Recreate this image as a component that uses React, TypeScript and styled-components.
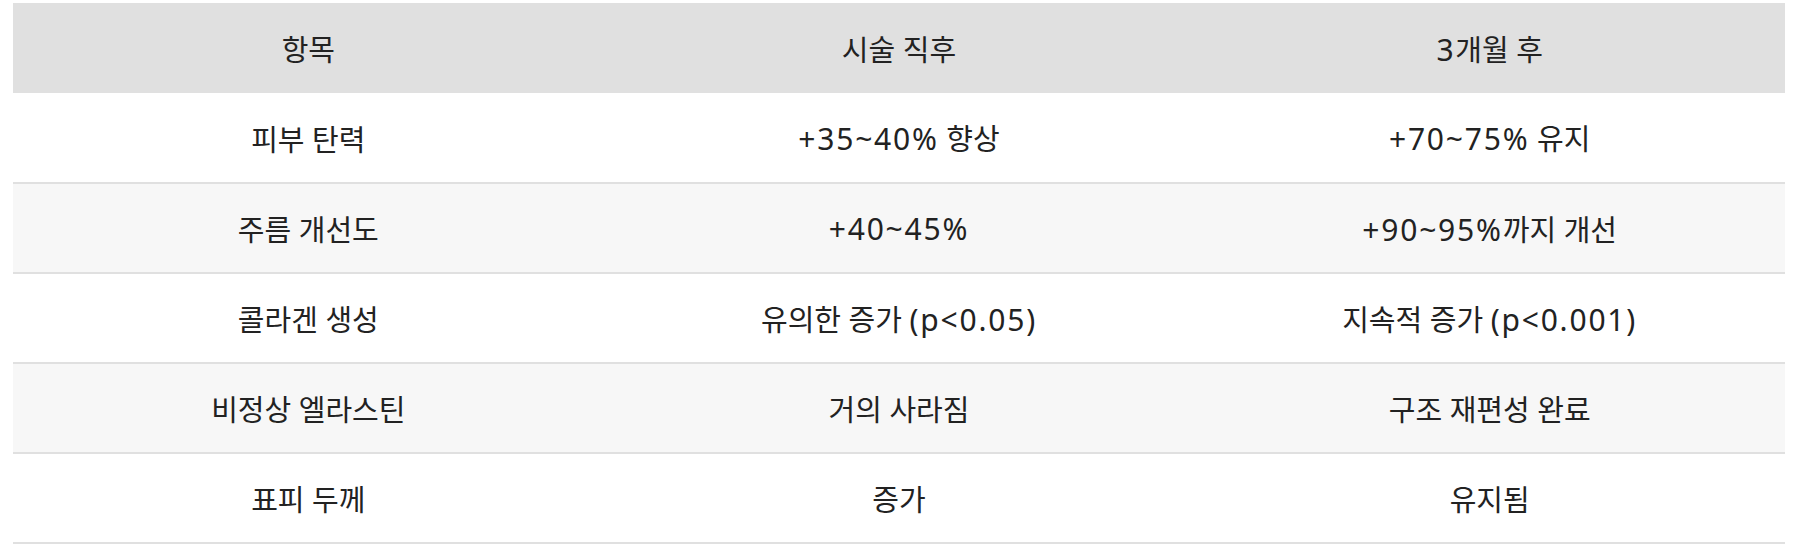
import React from "react";
import styled, { createGlobalStyle } from "styled-components";

const GlobalStyle = createGlobalStyle`
  html, body {
    margin: 0;
    padding: 0;
    background: #ffffff;
  }
  body {
    font-family: "Noto Sans", "Noto Sans CJK KR", sans-serif;
    color: #222222;
  }
`;

const Wrapper = styled.div`
  padding: 3px 17px 0 13px;
`;

const Table = styled.table`
  width: 100%;
  border-collapse: collapse;
  table-layout: fixed;
  font-size: 29px;
`;

const HeadRow = styled.tr`
  background: #e0e0e0;
`;

const HeadCell = styled.th`
  height: 90px;
  padding: 0 10px;
  font-weight: 400;
  text-align: center;
  vertical-align: middle;
  box-sizing: border-box;
`;

const Row = styled.tr<{ $striped: boolean }>`
  background: ${(p) => (p.$striped ? "#f7f7f7" : "#ffffff")};
  border-bottom: 2px solid #e0e0e0;
`;

const Cell = styled.td`
  height: 90px;
  padding: 0 10px;
  text-align: center;
  vertical-align: middle;
  box-sizing: border-box;
`;

// digits and symbols are set a touch larger and looser than the hangul
const Latin = styled.span`
  font-size: 30px;
  letter-spacing: 0.06em;
`;

const Text: React.FC<{ value: string }> = ({ value }) => (
  <>
    {value.split(/([^가-힣\s]+)/).map((part, i) =>
      i % 2 === 1 ? <Latin key={i}>{part}</Latin> : part
    )}
  </>
);

const headers = ["항목", "시술 직후", "3개월 후"];

const rows = [
  ["피부 탄력", "+35~40% 향상", "+70~75% 유지"],
  ["주름 개선도", "+40~45%", "+90~95%까지 개선"],
  ["콜라겐 생성", "유의한 증가 (p<0.05)", "지속적 증가 (p<0.001)"],
  ["비정상 엘라스틴", "거의 사라짐", "구조 재편성 완료"],
  ["표피 두께", "증가", "유지됨"],
];

export default function App() {
  return (
    <>
      <GlobalStyle />
      <Wrapper>
        <Table>
          <thead>
            <HeadRow>
              {headers.map((h) => (
                <HeadCell key={h}>
                  <Text value={h} />
                </HeadCell>
              ))}
            </HeadRow>
          </thead>
          <tbody>
            {rows.map((r, i) => (
              <Row key={r[0]} $striped={i % 2 === 1}>
                {r.map((c, j) => (
                  <Cell key={j}>
                    <Text value={c} />
                  </Cell>
                ))}
              </Row>
            ))}
          </tbody>
        </Table>
      </Wrapper>
    </>
  );
}
